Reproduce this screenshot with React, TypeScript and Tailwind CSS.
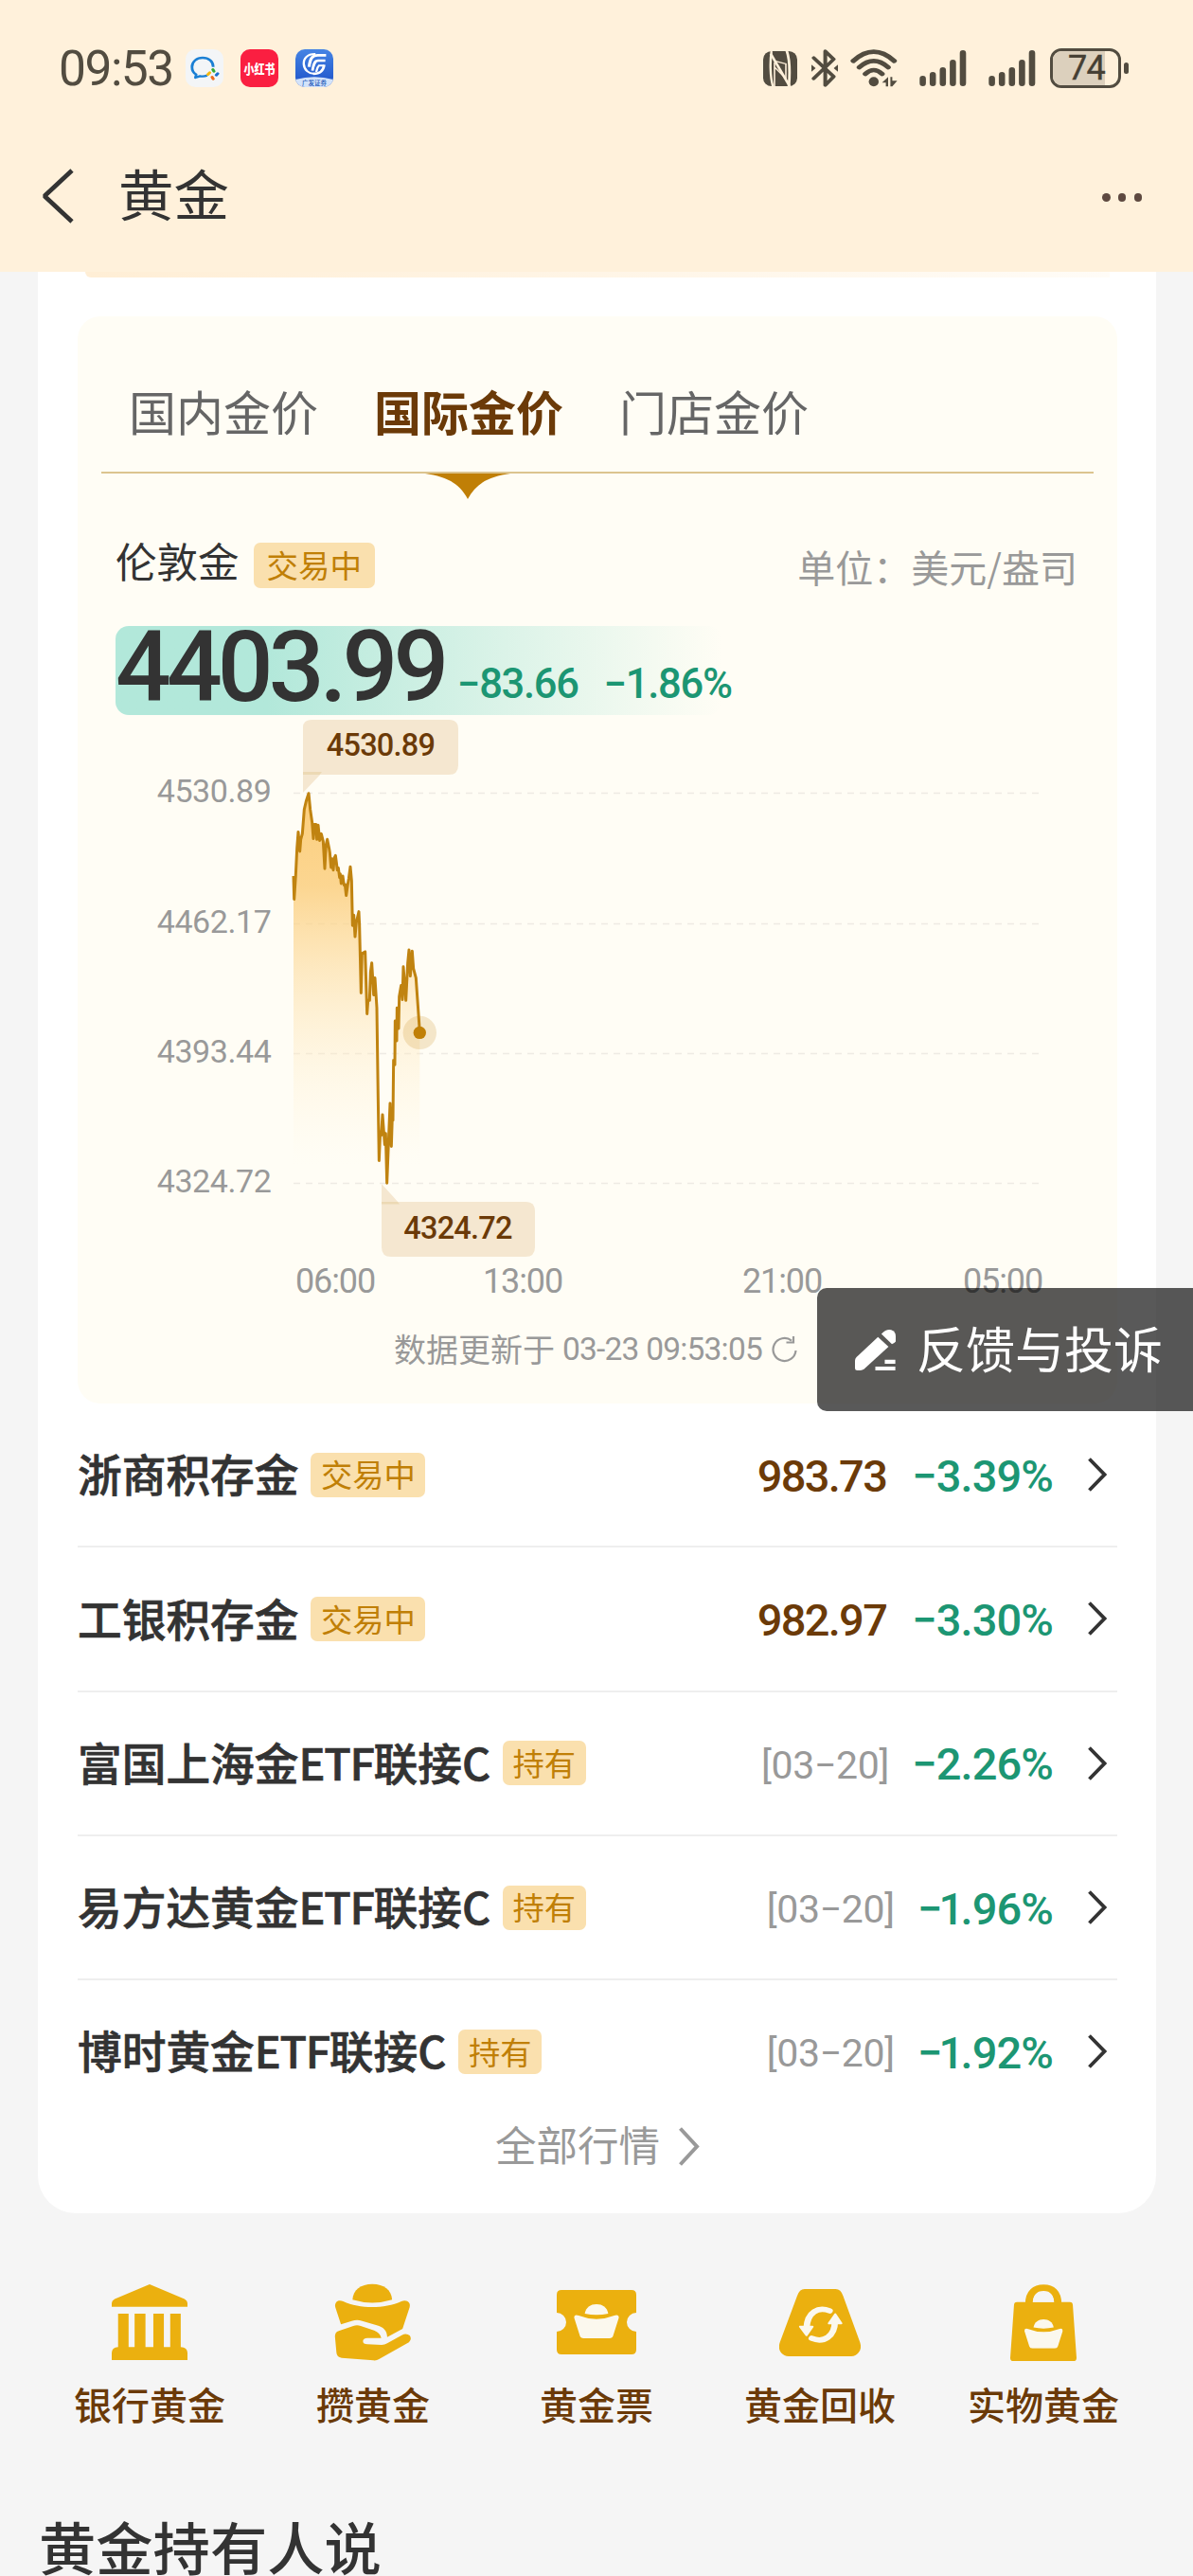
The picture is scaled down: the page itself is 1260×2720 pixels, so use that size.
import React from "react";

const INK = "#524c40";

/* ---------- status bar ---------- */

function WecomIcon() {
  return (
    <svg width="40" height="40" viewBox="488 156 100 120" preserveAspectRatio="none">
      <rect x="488" y="156" width="100" height="120" rx="26" ry="30" fill="#f3f5f7" />
      <path
        d="M561 212 C561 194 549 183 533 183 C517 183 505 195 505 212 C505 224 509 231 516 236 L514 246 L526 241 C533 243 539 242 545 239"
        fill="none"
        stroke="#1a7fd4"
        strokeWidth="7"
        strokeLinejoin="round"
      />
      <g strokeWidth="8" strokeLinecap="round">
        <path d="M560 220 L563 226" stroke="#35a936" />
        <path d="M573 233 L569 238" stroke="#1a6fd0" />
        <path d="M558 244 L561 250" stroke="#ee6a1c" />
        <path d="M552 230 L547 236" stroke="#f5b910" />
      </g>
    </svg>
  );
}

function RedNoteIcon() {
  return (
    <div className="flex h-10 w-10 items-center justify-center overflow-hidden rounded-[10px] bg-[#fa1f41]">
      <span className="scale-y-[1.25] whitespace-nowrap text-[11px] leading-none font-black text-white">小红书</span>
    </div>
  );
}

function BrokerIcon() {
  return (
    <div className="relative flex h-10 w-10 flex-col justify-end overflow-hidden rounded-[10px] bg-gradient-to-b from-[#4684e4] to-[#1d50c8]">
      <svg className="absolute left-0 top-0" width="40" height="40" viewBox="777 156 100 120" preserveAspectRatio="none">
        <path d="M777 276 V252 Q827 236 877 252 V276 Z" fill="#d3e3fa" />
        <g fill="none" stroke="#fff">
          <path d="M830 171 C808 170 798 186 799 203 C800 221 812 235 828 233" strokeWidth="6" />
          <path d="M858 175 H836 C822 175 816 184 813 212" strokeWidth="8" />
          <path d="M856 192 H837 C828 192 825 202 822 224" strokeWidth="7" />
          <path d="M853 205 C851 225 842 234 824 234" strokeWidth="7" />
          <path d="M853 208 H839 C835 212 834 220 832 228" strokeWidth="6" />
        </g>
      </svg>
      <span className="relative mb-[1px] whitespace-nowrap text-center text-[6.5px] leading-[8px] font-medium text-[#2258b8]">广发证券</span>
    </div>
  );
}

function Signal() {
  return (
    <svg width="50" height="40" viewBox="0 0 50 40">
      <g stroke={INK} strokeWidth="6.6" strokeLinecap="round">
        <path d="M3.6 31.3 V35.7 M14.2 27.3 V35.7 M24.8 22.3 V35.7 M35.4 14.3 V35.7 M46 4.3 V35.7" />
      </g>
    </svg>
  );
}

function StatusBar() {
  return (
    <div className="flex h-[144px] items-center pl-[62px] pr-[68px]">
      <span className="mt-[2px] w-[132px] font-['Roboto'] text-[51.5px] leading-none tracking-[-1.5px] text-[#524c40]">09:53</span>
      <div className="ml-[2px] flex gap-[18px]">
        <WecomIcon />
        <RedNoteIcon />
        <BrokerIcon />
      </div>
      <div className="ml-auto flex items-center">
        <svg width="36" height="37" viewBox="438 160 90 110" preserveAspectRatio="none">
          <rect x="438" y="160" width="90" height="110" rx="22" ry="26" fill={INK} />
          <g fill="none" stroke="#fff1db">
            <path d="M460 160 C456 190 456 240 464 272" strokeWidth="6" />
            <path d="M458 168 L508 270" strokeWidth="7" />
            <path d="M500 158 C510 190 508 240 506 270" strokeWidth="7" />
            <path d="M468 270 V196 M468 210 L498 246 V200 L466 190" strokeWidth="4" />
          </g>
        </svg>
        <svg className="ml-[15px]" width="28" height="40" viewBox="565 156 69 118" preserveAspectRatio="none">
          <g fill="none" stroke={INK} strokeWidth="10" strokeLinejoin="round" strokeLinecap="round">
            <path d="M571 183 L623 241 L601 268 V162 L623 187 L571 247" />
          </g>
          <path d="M565 204 L576 215 L565 226 Z M634 204 L623 215 L634 226 Z" fill={INK} />
        </svg>
        <svg className="ml-[13px]" width="50" height="40" viewBox="666 156 125 120" preserveAspectRatio="none">
          <g fill="none" stroke={INK} strokeWidth="14" strokeLinecap="round">
            <path d="M674 193 Q728 135 782 193" />
            <path d="M690 213 Q728 173 766 213" />
            <path d="M706 234 Q728 210 750 234" />
          </g>
          <ellipse cx="728" cy="259" rx="13" ry="15" fill={INK} />
          <path d="M750 262 L766 244 V274 H760 V262 Z M772 244 H777 V256 H790 L777 274 H772 Z" fill={INK} />
        </svg>
        <div className="ml-[23px] flex gap-[23px]">
          <Signal />
          <Signal />
        </div>
        <div className="relative ml-[15px] h-[42px] w-[75px] overflow-hidden rounded-[12px] border-[3.5px] border-[#524c40]">
          <div className="absolute inset-y-0 left-0 w-[55px] bg-[#dcd0bd]" />
          <span className="relative block pl-[2px] text-center font-['Roboto'] text-[36px] leading-[37px] tracking-[-0.8px] text-[#453f34] [-webkit-text-stroke:0.4px_#453f34]">74</span>
        </div>
        <div className="ml-[3px] h-[12px] w-[5px] rounded-full bg-[#524c40]" />
      </div>
    </div>
  );
}

function Header() {
  return (
    <header className="h-[287px] bg-[#fff1db]">
      <StatusBar />
      <div className="flex h-[126px] items-center pl-[43px] pr-[54px]">
        <svg width="35" height="58" viewBox="0 0 35 58" fill="none" stroke="#333" strokeWidth="4.8">
          <path d="M33 2 L4 29 L33 56" strokeLinejoin="bevel" />
        </svg>
        <h1 className="mb-[7px] ml-[47px] text-[58.5px] leading-none font-normal text-[#333]">黄金</h1>
        <div className="ml-auto mt-[3px] flex gap-[8.2px]">
          <i className="h-[8.4px] w-[8.4px] rounded-full bg-[#5e4940]" />
          <i className="h-[8.4px] w-[8.4px] rounded-full bg-[#5e4940]" />
          <i className="h-[8.4px] w-[8.4px] rounded-full bg-[#5e4940]" />
        </div>
      </div>
    </header>
  );
}

/* ---------- price card ---------- */

function Badge({ children }: { children: React.ReactNode }) {
  return (
    <span className="flex h-[47px] items-center rounded-[7px] bg-[#fae0ae] px-[10.5px] pb-[2px] text-[33.3px] leading-none whitespace-nowrap text-[#c07f06]">
      {children}
    </span>
  );
}

const LINE =
  "M90 468 L92 530 L97 465 L101 395 L105 350 L110 402 L113 370 L118 355 L124 290 L130 268 L138 247 L143 290 L149 325 L153 368 L156 330 L161 330 L164 370 L168 332 L173 373 L178 355 L184 375 L189 448 L193 385 L197 370 L203 395 L205 405 L209 445 L213 422 L216 452 L219 420 L223 413 L229 452 L232 446 L236 472 L238 462 L241 488 L246 468 L250 492 L253 490 L257 520 L261 495 L265 475 L270 443 L274 480 L277 600 L281 572 L285 630 L289 592 L297 563 L299 600 L304 780 L307 675 L317 670 L323 836 L326 800 L331 800 L334 725 L338 700 L344 785 L348 740 L354 820 L358 1060 L361 1228 L365 1150 L368 1160 L372 1105 L379 1185 L382 1155 L386 1288 L391 1180 L396 1075 L400 1190 L403 1110 L405 1120 L407 960 L411 972 L412 855 L417 908 L418 820 L423 875 L425 790 L431 760 L435 798 L438 710 L446 800 L452 700 L456 665 L460 735 L466 668 L470 715 L478 740 L483 800 L490 885";

const GRID = [
  { y: 837, label: "4530.89" },
  { y: 975, label: "4462.17" },
  { y: 1112, label: "4393.44" },
  { y: 1249, label: "4324.72" },
];

const HOURS = [
  { x: 354, label: "06:00" },
  { x: 552, label: "13:00" },
  { x: 826, label: "21:00" },
  { x: 1059, label: "05:00" },
];

function Chart() {
  return (
    <svg className="block" width="1098" height="625" viewBox="82 755 1098 625" fontFamily="Roboto, sans-serif">
      <defs>
        <linearGradient id="area" x1="0" y1="247" x2="0" y2="1240" gradientUnits="userSpaceOnUse">
          <stop offset="0" stopColor="#fbc666" stopOpacity="0.85" />
          <stop offset="0.25" stopColor="#fbcc78" stopOpacity="0.8" />
          <stop offset="0.6" stopColor="#fde2ae" stopOpacity="0.45" />
          <stop offset="0.85" stopColor="#fff0d0" stopOpacity="0.2" />
          <stop offset="1" stopColor="#fff5e0" stopOpacity="0" />
        </linearGradient>
      </defs>
      {GRID.map((g) => (
        <g key={g.label}>
          <path d={`M310 ${g.y + 0.5} H1097`} stroke="#eeebe4" strokeWidth="1.6" strokeDasharray="7 6" />
          <text x="286.500" y={g.y + 9.5} textAnchor="end" fontSize="34" fill="#999" letterSpacing="-0.4">
            {g.label}
          </text>
        </g>
      ))}
      <g transform="translate(280 740) scale(0.33333 0.39541)">
        <path d={LINE + " V1288 H90 Z"} fill="url(#area)" />
        <path d={LINE} fill="none" stroke="#c08310" strokeWidth="3" strokeLinejoin="round" vectorEffect="non-scaling-stroke" />
      </g>
      <circle cx="443.3" cy="1090.4" r="17.7" fill="#c07f06" fillOpacity="0.18" />
      <circle cx="443.3" cy="1090.4" r="6.7" fill="#c07f06" />
      <g fill="#f5e7d0">
        <path d="M320 768 Q320 760 330 760 H474 Q484 760 484 770 V808 Q484 818 474 818 H320 Z" />
        <path d="M320 816 H340 L320 837 Z" />
        <path d="M403 1269 H555 Q565 1269 565 1279 V1317 Q565 1327 555 1327 H413 Q403 1327 403 1317 Z" />
        <path d="M403 1250 V1271 H422 Z" />
      </g>
      <path d="M320 815 H340 L337.500 818 H320 Z M403 1269 H420 L422 1271.500 H403 Z" fill="#ecd9b4" />
      <g fontSize="32.500" fontWeight="500" fill="#6b3a08" textAnchor="middle" letterSpacing="-0.8">
        <text x="402" y="797.500">4530.89</text>
        <text x="483.500" y="1307.500">4324.72</text>
      </g>
      {HOURS.map((h) => (
        <text key={h.label} x={h.x} y="1364.500" textAnchor="middle" fontSize="36" fill="#999" letterSpacing="-1.1">
          {h.label}
        </text>
      ))}
    </svg>
  );
}

function PriceCard() {
  return (
    <section className="h-[1148px] rounded-[24px] bg-[#fffdf5]">
      <div className="mx-[25px] flex h-[166px] items-center gap-[59px] border-b-2 border-[#dcc48f] pl-[29px] pt-[34px] text-[50px] leading-none text-[#666]">
        <span>国内金价</span>
        <span className="relative font-bold text-[#6b3a08]">
          国际金价
          <svg className="absolute left-[54px] top-[91.500px]" width="90" height="27" viewBox="0 0 90 27">
            <path d="M0 0 H90 C68 3 54 10 45 27 C36 10 22 3 0 0 Z" fill="#c07f06" />
          </svg>
        </span>
        <span>门店金价</span>
      </div>

      <div className="ml-[40px] mr-[42px] mt-[64px] flex h-[60px] items-center">
        <span className="mb-[4px] text-[43.500px] leading-none text-[#333]">伦敦金</span>
        <span className="ml-[15px] mt-[5px] flex h-[48px] items-center rounded-[7px] bg-[#fae0ae] px-[14px] pb-[2px] text-[33.500px] leading-none text-[#c07f06]">交易中</span>
        <span className="ml-auto mt-[8px] text-[40px] leading-none text-[#999]">单位：美元/盎司</span>
      </div>

      <div className="ml-[40px] mt-[37px] flex h-[94px] w-[640px] items-end rounded-[14px] bg-gradient-to-r from-[#b2e8da] from-25% to-[#fffdf5] font-['Roboto'] font-medium whitespace-nowrap text-[#1c9673]">
        <span className="w-[361px] shrink-0 self-start text-[103.500px] leading-[88px] tracking-[-4.900px] text-[#333]">4403.99</span>
        <span className="mb-[11px] shrink-0 text-[43.500px] leading-none tracking-[-1.3px]">−83.66</span>
        <span className="mb-[11px] ml-[27px] shrink-0 text-[43.500px] leading-none tracking-[-1.3px]">−1.86%</span>
      </div>

      <Chart />

      <div className="flex h-[90px] items-center justify-center pr-[4px] text-[34px] leading-none text-[#999]">
        <span className="mb-[2px]">数据更新于</span>
        <span className="ml-[8px] font-['Roboto'] text-[33.500px] tracking-[-0.8px]">03-23 09:53:05</span>
        <svg className="ml-[10px]" width="27" height="28" viewBox="0 0 27 28" fill="none" stroke="#999" strokeWidth="2.2">
          <path d="M25.500 15 A12 12 0 1 1 21 4.600" />
          <path d="M23 0 V6.500 H15.500" />
        </svg>
      </div>
    </section>
  );
}

/* ---------- list ---------- */

type Item = { name: string; tag: string; price?: string; date?: string; pct: string };

const ITEMS: Item[] = [
  { name: "浙商积存金", tag: "交易中", price: "983.73", pct: "−3.39%" },
  { name: "工银积存金", tag: "交易中", price: "982.97", pct: "−3.30%" },
  { name: "富国上海金ETF联接C", tag: "持有", date: "[03−20]", pct: "−2.26%" },
  { name: "易方达黄金ETF联接C", tag: "持有", date: "[03−20]", pct: "−1.96%" },
  { name: "博时黄金ETF联接C", tag: "持有", date: "[03−20]", pct: "−1.92%" },
];

function ItemName({ name }: { name: string }) {
  const [head, tail] = name.split("ETF");
  return (
    <span className="mb-[3px] text-[46.700px] leading-none font-medium whitespace-nowrap text-[#333] [-webkit-text-stroke:0.7px_#333]">
      {head}
      {tail && <span className="tracking-[-1.3px]">ETF</span>}
      {tail}
    </span>
  );
}

function Row({ item }: { item: Item }) {
  const narrow = item.pct.startsWith("−1");
  return (
    <li className="flex h-[152.300px] items-center border-b-2 border-[#eee] pr-[11px] last:border-transparent">
      <ItemName name={item.name} />
      <span className="ml-[13px]">
        <Badge>{item.tag}</Badge>
      </span>
      <div className="ml-auto mt-[2px] flex items-center font-['Roboto'] text-[47px] leading-none">
        {item.price && <span className="font-medium tracking-[-1.7px] text-[#6b3a08]">{item.price}</span>}
        {item.date && <span className="mr-[-3px] mt-[3px] text-[41px] tracking-[-0.300px] text-[#999]">{item.date}</span>}
        <span className="ml-[27px] font-medium tracking-[-0.900px] text-[#1c9673]">
          {narrow ? (
            <>
              <span className="tracking-[-3.800px]">−1</span>
              {item.pct.slice(2)}
            </>
          ) : (
            item.pct
          )}
        </span>
      </div>
      <svg className="ml-[37px]" width="20" height="36" viewBox="0 0 20 36" fill="none" stroke="#333" strokeWidth="3.8">
        <path d="M1.500 1.500 L17.500 18 L1.500 34.500" />
      </svg>
    </li>
  );
}

/* ---------- shortcuts ---------- */

const GOLD = "#ebb00f";
const PAGE = "#f5f5f5";

function BankIcon() {
  return (
    <svg width="80" height="80" viewBox="198 94 202 238" preserveAspectRatio="none" fill={GOLD}>
      <path d="M299 94 L392 140 Q400 145 400 153 V165 H198 V153 Q198 145 206 140 Z" />
      <path d="M215 186 H243 V291 H259 V186 H288 V291 H309 V186 H337 V291 H354 V186 H382 V291 Q400 292 400 310 V332 H198 V310 Q198 292 215 291 Z" />
    </svg>
  );
}

function HandIcon() {
  return (
    <svg width="82" height="82" viewBox="791 92 208 246" preserveAspectRatio="none">
      <path d="M840 144 C841 113 862 94 893 94 C924 94 945 113 946 144 Q893 163 840 144 Z" fill={GOLD} />
      <path d="M794 168 C791 150 802 142 815 149 C860 173 925 173 971 149 C985 142 997 152 993 168 L974 236 L933 262 C932 240 922 231 905 225 L866 211 Q852 206 838 211 L809 222 Z" fill={GOLD} />
      <path d="M793 260 Q793 247 803 243 L842 227 Q852 223 862 227 L898 241 Q914 248 917 265 H880 Q868 266 868 275 Q868 285 880 285 L918 287 Q926 287 933 282 L972 256 Q984 248 993 257 Q1000 268 991 279 L911 332 Q905 337 896 336 L811 328 Q798 326 797 312 Z" fill={GOLD} />
    </svg>
  );
}

function Ingot({ x, y, w, h }: { x: number; y: number; w: number; h: number }) {
  return (
    <svg x={x} y={y} width={w} height={h} viewBox="0 0 120 108" preserveAspectRatio="none" fill="#fbf8ee">
      <path d="M29 30 C32 10 44 0 60 0 C76 0 88 10 91 30 Q60 38 29 30 Z" />
      <path d="M1 43 Q1 31 13 36 Q60 58 107 36 Q119 31 119 43 L104 100 Q102 108 94 108 H26 Q18 108 16 100 Z" />
    </svg>
  );
}

function TicketIcon() {
  return (
    <svg width="84" height="68" viewBox="0 0 84 68">
      <path d="M5 0 H79 Q84 0 84 5 V24 A10 10 0 0 0 84 44 V63 Q84 68 79 68 H5 Q0 68 0 63 V44 A10 10 0 0 0 0 24 V5 Q0 0 5 0 Z" fill={GOLD} />
      <Ingot x={18} y={15} w={48} h={36} />
    </svg>
  );
}

function RecycleIcon() {
  return (
    <svg width="86" height="71" viewBox="465 108 218 213" preserveAspectRatio="none">
      <path d="M533 108 H616 Q630 108 636 130 L681 276 Q687 296 677 310 Q670 321 658 321 H490 Q478 321 470 310 Q461 296 467 276 L513 130 Q519 108 533 108 Z" fill={GOLD} />
      <g fill="none" stroke="#fbf8ee" strokeWidth="17">
        <path d="M600 177 C570 163 540 180 538 232" strokeLinecap="round" />
        <path d="M552 264 C584 280 614 258 614 210" strokeLinecap="round" />
      </g>
      <g fill="#fbf8ee" stroke="#fbf8ee" strokeWidth="6" strokeLinejoin="round">
        <path d="M521 227 L554 227 L538 254 Z" />
        <path d="M598 217 L631 217 L615 188 Z" />
      </g>
    </svg>
  );
}

function BagIcon() {
  return (
    <svg width="70" height="81" viewBox="1082 94 177 243" preserveAspectRatio="none">
      <path d="M1132 156 C1132 118 1150 105 1171 105 C1192 105 1209 118 1209 156" fill="none" stroke={GOLD} strokeWidth="20" />
      <path d="M1100 150 H1241 Q1249 150 1249 160 L1259 327 Q1259 337 1251 337 H1090 Q1082 337 1082 327 L1092 160 Q1092 150 1100 150 Z" fill={GOLD} />
      <path d="M1142 150 C1144 126 1157 117 1171 117 C1185 117 1197 126 1199 150 Z" fill={PAGE} />
      <Ingot x={1119} y={205} w={104} h={92} />
    </svg>
  );
}

const SHORTCUTS = [
  { label: "银行黄金", icon: <BankIcon /> },
  { label: "攒黄金", icon: <HandIcon /> },
  { label: "黄金票", icon: <TicketIcon /> },
  { label: "黄金回收", icon: <RecycleIcon /> },
  { label: "实物黄金", icon: <BagIcon /> },
];

export default function App() {
  return (
    <div className="relative h-[2720px] w-[1260px] overflow-hidden bg-[#f5f5f5] font-['Noto_Sans_CJK_SC',sans-serif]">
      <Header />

      <main className="ml-[40px] h-[2050px] w-[1181px] rounded-b-[40px] bg-white pl-[42px] pr-[41px]">
        <div className="mx-[8px] h-[6px] rounded-bl-[16px] bg-gradient-to-r from-[#ffeed5] to-[#fffcf7]" />
        <div className="pt-[41px]">
          <PriceCard />
        </div>
        <ul>
          {ITEMS.map((it) => (
            <Row key={it.name} item={it} />
          ))}
        </ul>
        <div className="flex h-[46px] items-center justify-center gap-[20px] text-[43.500px] leading-none text-[#999]">
          <span className="mb-[5px]">全部行情</span>
          <svg width="22" height="41" viewBox="0 0 22 41" fill="none" stroke="#999" strokeWidth="4">
            <path d="M1.500 1.500 L19 20.500 L1.500 39.500" />
          </svg>
        </div>
      </main>

      <nav className="mx-[40px] mt-[73px] grid grid-cols-5">
        {SHORTCUTS.map((s) => (
          <div key={s.label} className="flex flex-col items-center">
            <div className="flex h-[84px] items-center">{s.icon}</div>
            <span className="mt-[22px] text-[40px] leading-[44px] font-medium text-[#6b3a08]">{s.label}</span>
          </div>
        ))}
      </nav>

      <h2 className="ml-[41px] mt-[101px] text-[60.300px] leading-[54px] font-medium whitespace-nowrap text-[#333]">黄金持有人说</h2>

      <button className="absolute right-0 top-[1360px] flex h-[130px] w-[397px] items-center rounded-l-[10px] bg-black/65 pl-[40px] text-white">
        <svg width="43" height="43" viewBox="665 488 108 127" preserveAspectRatio="none" fill="#fff">
          <path d="M726 511 L754 541 L690 610 Q685 615 679 615 H671 Q665 615 665 608 V585 Q665 579 669 574 Z" />
          <path d="M735 501 Q749 485 761 489 Q773 494 773 508 V525 Q770 530 763 533 Z" />
          <path d="M744 582 H772 V594 H744 Z M719 603 H772 V615 H719 Z" />
        </svg>
        <span className="mb-[5px] ml-[22px] text-[52px] leading-none">反馈与投诉</span>
      </button>
    </div>
  );
}
